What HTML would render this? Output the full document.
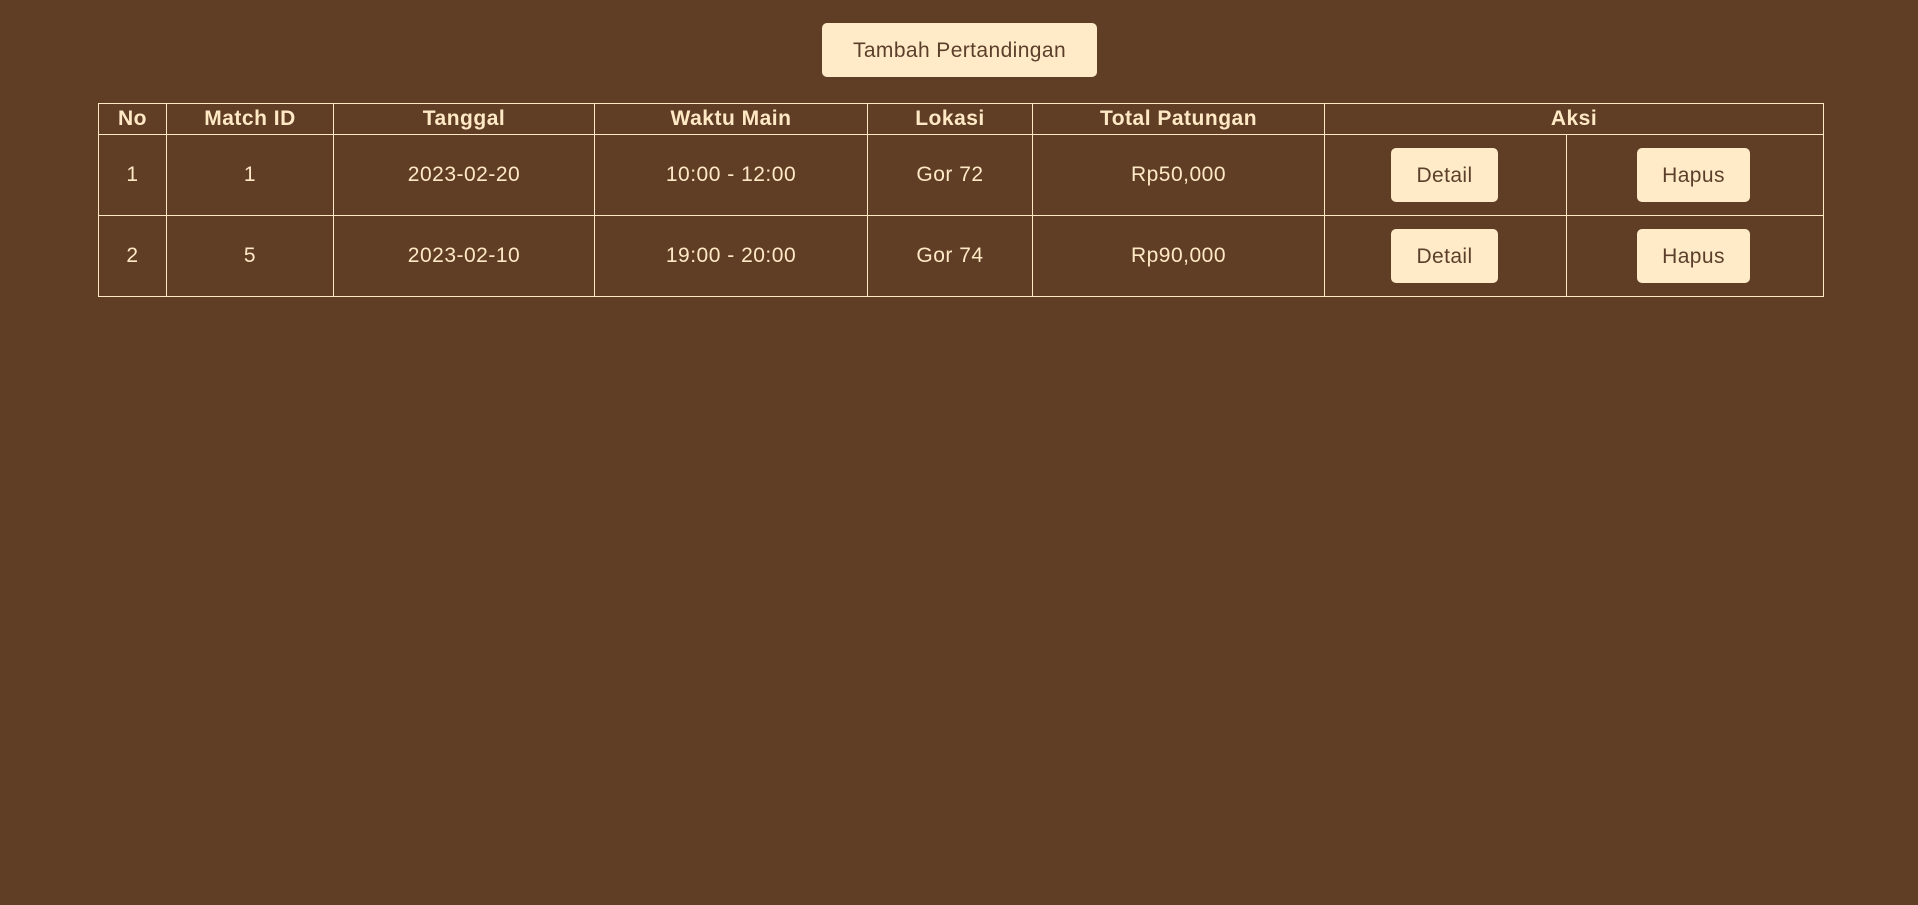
<!DOCTYPE html>
<html><head><style>
body{margin:0;background:#603e26;width:1918px;height:905px;overflow:hidden;font-family:"Liberation Sans",sans-serif;color:#ffe9c5;position:relative}
.btn{position:absolute;background:#ffebc8;color:#5b3f2b;border-radius:5px;display:flex;align-items:center;justify-content:center;font-size:21px;letter-spacing:0.4px;padding-top:2px;box-sizing:border-box}
table{position:absolute;left:98px;top:103px;border-collapse:collapse;width:1726px}
td,th{border:1px solid #ffe9c5;text-align:center;font-size:21px;letter-spacing:0.5px;padding:0}
th{height:30px;font-weight:bold}
td{height:80px;position:relative}
</style></head><body>
<div class="btn" style="left:822px;top:23px;width:275px;height:54px">Tambah Pertandingan</div>
<table>
<tr><th style="width:67px">No</th><th style="width:166px">Match ID</th><th style="width:260px">Tanggal</th><th style="width:272px">Waktu Main</th><th style="width:164px">Lokasi</th><th style="width:291px">Total Patungan</th><th colspan="2">Aksi</th></tr>
<tr><td>1</td><td>1</td><td>2023-02-20</td><td>10:00 - 12:00</td><td>Gor 72</td><td>Rp50,000</td><td style="width:241px"></td><td></td></tr>
<tr><td>2</td><td>5</td><td>2023-02-10</td><td>19:00 - 20:00</td><td>Gor 74</td><td>Rp90,000</td><td></td><td></td></tr>
</table>
<div class="btn" style="left:1391px;top:148px;width:107px;height:54px">Detail</div>
<div class="btn" style="left:1637px;top:148px;width:113px;height:54px">Hapus</div>
<div class="btn" style="left:1391px;top:229px;width:107px;height:54px">Detail</div>
<div class="btn" style="left:1637px;top:229px;width:113px;height:54px">Hapus</div>
</body></html>
